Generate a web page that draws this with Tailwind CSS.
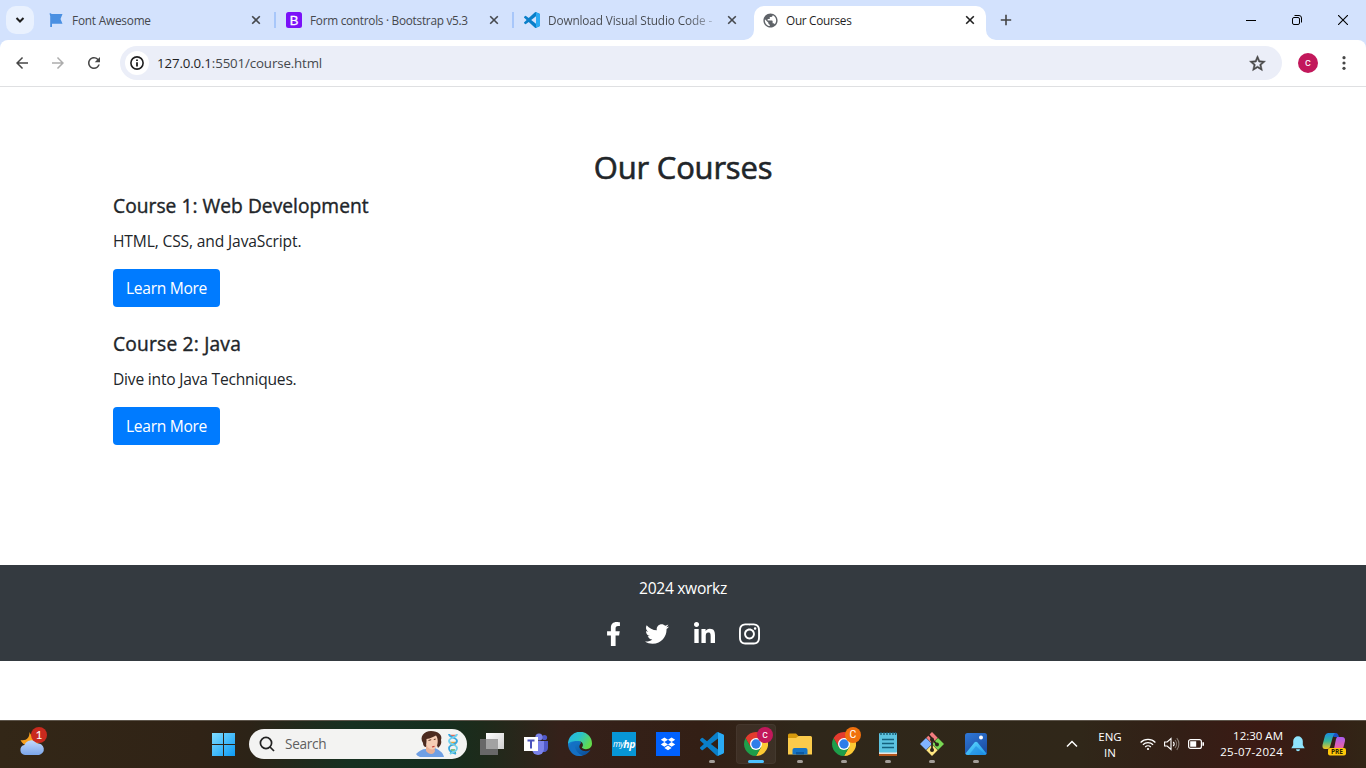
<!DOCTYPE html>
<html lang="en">
<head>
<meta charset="utf-8">
<title>Our Courses</title>
<script src="https://cdn.jsdelivr.net/npm/@tailwindcss/browser@4"></script>
</head>
<body class="w-[1366px] h-[768px] overflow-hidden flex flex-col bg-white font-['Open_Sans','Noto_Sans',sans-serif]">
<svg class="hidden">
  <defs>
    <symbol id="x" viewBox="0 0 10 10"><path d="M1.2 1.2l7.6 7.6M8.800 1.200l-7.600 7.600" stroke="currentColor" stroke-width="1.6" fill="none"/></symbol>
    <symbol id="code" viewBox="0 0 24 24"><path fill="#0a7fc9" d="M23.15 2.587L18.21.21a1.494 1.494 0 0 0-1.705.29l-9.46 8.63-4.12-3.128a.999.999 0 0 0-1.276.057L.327 7.261A1 1 0 0 0 .326 8.74L3.899 12 .326 15.26a1 1 0 0 0 .001 1.479L1.65 17.94a.999.999 0 0 0 1.276.057l4.12-3.128 9.46 8.63a1.492 1.492 0 0 0 1.704.29l4.942-2.377A1.5 1.5 0 0 0 24 20.06V3.939a1.5 1.5 0 0 0-.85-1.352zm-5.146 14.861L10.826 12l7.178-5.448v10.896z"/><path fill="#2aaaf3" d="M18 .2l5.2 2.400Q24 3 24 4v16q0 1-.8 1.400L18 23.800z"/></symbol>
    <symbol id="chrome" viewBox="0 0 24 24"><path fill="#fcc934" d="M12 6h10.400A12 12 0 0 1 12 24l5.200-9z"/><path fill="#1e9e4a" d="M1.610 6A12 12 0 0 0 12 24l5.200-9L12 12 6.800 15z"/><path fill="#e33b2e" d="M1.610 6L6.800 15 12 12V6h10.390A12 12 0 0 0 1.610 6z"/><circle cx="12" cy="12" r="6" fill="#fff"/><circle cx="12" cy="12" r="4.700" fill="#2f7de9"/></symbol>
  </defs>
</svg>

<!-- tab strip -->
<div class="h-10 shrink-0 bg-[#d3e2fd] flex text-[12px] text-[#45484d]">
  <div class="w-[37px] pl-1.5 pt-1.5 shrink-0">
    <div class="size-7 rounded-[10px] bg-[#e9f1fe] flex items-center justify-center">
      <svg class="size-[10px]" viewBox="0 0 10 10"><path d="M1.500 3l3.500 3.500L8.500 3" fill="none" stroke="#1f1f1f" stroke-width="2"/></svg>
    </div>
  </div>
  <div class="w-[238px] h-10 flex items-center pl-[11px] pr-[14px] shrink-0">
    <svg class="size-4 shrink-0" viewBox="0 0 16 16"><path fill="#4a90e2" d="M1.500 1.500a1.200 1.200 0 0 1 2 .5h11l-2 5 2 4.700H4V15H2.200V4z"/></svg>
    <span class="ml-2 mt-px flex-1 whitespace-nowrap text-[11.8px] tracking-[-0.2px]">Font Awesome</span>
    <svg class="size-[10px]"><use href="#x"/></svg>
  </div>
  <div class="w-[238px] h-10 flex items-center pl-0 pr-[14px] shrink-0">
    <div class="w-0.5 h-4 -ml-px bg-[#a8c7fa]"></div>
    <svg class="size-4 shrink-0 ml-[10px]" viewBox="0 0 16 16"><rect width="16" height="16" rx="2.500" fill="#7a11f8"/><text x="8" y="12.800" text-anchor="middle" font-family="Liberation Sans" font-size="13" fill="#fff" stroke="#fff" stroke-width=".3">B</text></svg>
    <span class="ml-2 mt-px flex-1 whitespace-nowrap text-[11.8px] tracking-[-0.27px]">Form controls · Bootstrap v5.3</span>
    <svg class="size-[10px]"><use href="#x"/></svg>
  </div>
  <div class="w-[238px] h-10 flex items-center pl-0 pr-[14px] shrink-0">
    <div class="w-0.5 h-4 -ml-px bg-[#a8c7fa]"></div>
    <svg class="size-4 shrink-0 ml-[10px]"><use href="#code"/></svg>
    <span class="ml-2 mt-px whitespace-nowrap text-[11.8px] tracking-[-0.13px] bg-linear-to-r from-[#45484d] from-85% to-[#45484d]/30 bg-clip-text text-transparent">Download Visual Studio Code -</span>
    <span class="flex-1"></span>
    <svg class="size-[10px]"><use href="#x"/></svg>
  </div>
  <div class="w-[238px] h-10 flex items-end shrink-0 -ml-[7px] mr-[7px] text-[#1f1f1f]">
    <svg class="w-[10px] h-[10px] shrink-0" viewBox="0 0 10 10"><path d="M10 0V10H0A10 10 0 0 0 10 0z" fill="#fff"/></svg>
    <div class="w-[232px] h-[34px] bg-white rounded-t-[10px] flex items-center pl-[7.500px] pr-[11px] pb-[6px] shrink-0">
      <svg class="size-[17px] shrink-0" viewBox="0 0 24 24"><path fill="#5f6368" d="M12 2C6.480 2 2 6.480 2 12s4.480 10 10 10 10-4.480 10-10S17.520 2 12 2zm-1 17.930c-3.950-.490-7-3.850-7-7.930 0-.620.080-1.210.210-1.790L9 15v1c0 1.100.9 2 2 2v1.930zm6.900-2.540c-.260-.810-1-1.390-1.900-1.390h-1v-3c0-.550-.450-1-1-1H8v-2h2c.550 0 1-.450 1-1V7h2c1.100 0 2-.9 2-2v-.410c2.930 1.190 5 4.060 5 7.410 0 2.080-.8 3.970-2.100 5.390z"/></svg>
      <span class="ml-[7.500px] mt-px flex-1 whitespace-nowrap text-[11.8px] tracking-[-0.3px]">Our Courses</span>
      <svg class="size-[10px]"><use href="#x"/></svg>
    </div>
    <svg class="w-[10px] h-[10px] shrink-0" viewBox="0 0 10 10"><path d="M0 0V10H10A10 10 0 0 1 0 0z" fill="#fff"/></svg>
  </div>
  <div class="flex-1 flex items-center text-[#1f1f1f]">
    <svg class="size-3 ml-[11px]" viewBox="0 0 12 12"><path d="M6 .8v10.400M.8 6h10.400" stroke="#444" stroke-width="1.600"/></svg>
    <span class="flex-1"></span>
    <svg class="w-[10px] h-[10px] mr-[36px]" viewBox="0 0 10 10"><path d="M0 5.500h10" stroke="#000"/></svg>
    <svg class="w-[10px] h-[10px] mr-[36px]" viewBox="0 0 10 10" fill="none" stroke="#000"><rect x=".5" y="2.500" width="7" height="7" rx="1.500"/><path d="M2.500.5H7A2.500 2.500 0 0 1 9.500 3v4.500"/></svg>
    <svg class="w-[10px] h-[10px] mr-[18px]" viewBox="0 0 10 10"><path d="M0 0l10 10M10 0L0 10" stroke="#000" stroke-width="1.100"/></svg>
  </div>
</div>

<!-- toolbar -->
<div class="h-[47px] shrink-0 bg-[#d3e2fd]">
  <div class="h-full bg-white rounded-t-[8px] border-b border-[#dfe0e2] flex items-center">
    <svg class="size-[18px] ml-[13px]" viewBox="0 0 24 24"><path fill="#474747" d="M20 11H7.830l5.590-5.590L12 4l-8 8 8 8 1.410-1.410L7.830 13H20v-2z"/></svg>
    <svg class="size-[18px] ml-[18px] rotate-180" viewBox="0 0 24 24"><path fill="#adadad" d="M20 11H7.830l5.590-5.590L12 4l-8 8 8 8 1.410-1.410L7.830 13H20v-2z"/></svg>
    <svg class="size-[18px] ml-[18px]" viewBox="0 0 24 24"><path fill="#474747" d="M17.650 6.350A7.958 7.958 0 0 0 12 4c-4.420 0-7.990 3.580-7.990 8s3.570 8 7.990 8c3.730 0 6.840-2.550 7.730-6h-2.080A5.990 5.990 0 0 1 12 18c-3.310 0-6-2.690-6-6s2.690-6 6-6c1.660 0 3.140.690 4.220 1.780L13 11h7V4l-2.350 2.350z"/></svg>
    <div class="ml-[17px] w-[1162px] h-[34px] rounded-full bg-[#ebeef8] flex items-center pl-[5px] pr-[15px]">
      <div class="size-6 rounded-full bg-white flex items-center justify-center">
        <svg class="size-[14px]" viewBox="0 0 14 14"><circle cx="7" cy="7" r="6.100" fill="none" stroke="#1f1f1f" stroke-width="1.600"/><path d="M7 6.200v4.200M7 3.500v1.600" stroke="#1f1f1f" stroke-width="1.800"/></svg>
      </div>
      <span class="ml-2 mt-px flex-1 text-[13.300px] tracking-[-0.14px] text-[#45484d]"><span class="text-[#1f1f1f]">127.0.0.1</span>:5501/course.html</span>
      <svg class="size-[19px]" viewBox="0 0 24 24"><path fill="#474747" stroke="#474747" stroke-width=".7" d="M22 9.240l-7.190-.620L12 2 9.190 8.630 2 9.240l5.460 4.730L5.820 21 12 17.270 18.180 21l-1.630-7.030L22 9.240zM12 15.400l-3.760 2.270 1-4.280-3.320-2.880 4.380-.380L12 6.100l1.710 4.040 4.380.380-3.320 2.880 1 4.280L12 15.400z"/></svg>
    </div>
    <div class="size-5 ml-4 rounded-full bg-[#c2185b] text-white text-[11px] font-['Roboto'] flex items-center justify-center">c</div>
    <svg class="w-1 h-[14px] ml-6" viewBox="0 0 4 14" fill="#474747"><circle cx="2" cy="1.700" r="1.600"/><circle cx="2" cy="7" r="1.600"/><circle cx="2" cy="12.300" r="1.600"/></svg>
  </div>
</div>

<!-- page -->
<main class="h-[478px] shrink-0 px-[113px] pt-[61px] text-[#212529]">
  <h2 class="text-center text-[31px] leading-[38px] tracking-[-0.2px] [-webkit-text-stroke:0.6px_#212529]">Our Courses</h2>
  <h5 class="mt-2 text-[19.200px] leading-6 tracking-[0.04px] [-webkit-text-stroke:0.4px_#212529]">Course 1: Web Development</h5>
  <p class="mt-[11px] text-[15.600px] leading-6 tracking-[-0.140px]">HTML, CSS, and JavaScript.</p>
  <a class="mt-4 flex w-[107px] h-[38px] pt-0.5 items-center justify-center rounded-[4px] bg-[#007bff] text-white text-[15.600px] tracking-[-0.320px]">Learn More</a>
  <h5 class="mt-[25px] text-[19.200px] leading-6 tracking-[0.2px] [-webkit-text-stroke:0.4px_#212529]">Course 2: Java</h5>
  <p class="mt-[11px] text-[15.600px] leading-6 tracking-[-0.210px]">Dive into Java Techniques.</p>
  <a class="mt-4 flex w-[107px] h-[38px] pt-0.5 items-center justify-center rounded-[4px] bg-[#007bff] text-white text-[15.600px] tracking-[-0.320px]">Learn More</a>
</main>
<footer class="h-24 shrink-0 bg-[#343a40] text-white flex flex-col items-center pt-[11px]">
  <p class="text-[15.600px] leading-6 tracking-[-0.3px]">2024 xworkz</p>
  <div class="mt-[22px] flex gap-[24.400px] items-center">
    <svg class="w-[15px] h-6" viewBox="0 0 320 512" fill="#fff"><path d="M279.140 288l14.220-92.660h-88.910v-60.130c0-25.350 12.420-50.060 52.240-50.060h40.420V6.260S260.430 0 225.360 0c-73.220 0-121.080 44.380-121.080 124.720v70.620H22.890V288h81.390v224h100.170V288z"/></svg>
    <svg class="size-6" viewBox="0 0 512 512" fill="#fff"><path d="M459.370 151.716c.325 4.548.325 9.097.325 13.645 0 138.720-105.583 298.558-298.558 298.558-59.452 0-114.680-17.219-161.137-47.106 8.447.974 16.568 1.299 25.340 1.299 49.055 0 94.213-16.568 130.274-44.832-46.132-.975-84.792-31.188-98.112-72.772 6.498.974 12.995 1.624 19.818 1.624 9.421 0 18.843-1.300 27.614-3.573-48.081-9.747-84.143-51.980-84.143-102.985v-1.299c13.969 7.797 30.214 12.670 47.431 13.319-28.264-18.843-46.781-51.005-46.781-87.391 0-19.492 5.197-37.360 14.294-52.954 51.655 63.675 129.300 105.258 216.365 109.807-1.624-7.797-2.599-15.918-2.599-24.040 0-57.828 46.782-104.934 104.934-104.934 30.213 0 57.502 12.670 76.670 33.137 23.715-4.548 46.456-13.320 66.599-25.340-7.798 24.366-24.366 44.833-46.132 57.827 21.117-2.273 41.584-8.122 60.426-16.243-14.292 20.791-32.161 39.308-52.628 54.253z"/></svg>
    <svg class="w-[21px] h-6" viewBox="0 0 448 512" fill="#fff"><path d="M100.280 448H7.400V148.900h92.880zM53.790 108.100C24.090 108.100 0 83.500 0 53.800a53.790 53.790 0 0 1 107.580 0c0 29.700-24.100 54.300-53.790 54.300zM447.900 448h-92.680V302.400c0-34.700-.7-79.200-48.290-79.200-48.290 0-55.690 37.700-55.690 76.700V448h-92.780V148.900h89.080v40.800h1.300c12.400-23.500 42.690-48.300 87.880-48.300 94 0 111.280 61.900 111.280 142.300V448z"/></svg>
    <svg class="w-[21px] h-6" viewBox="0 0 448 512" fill="#fff"><path d="M224.100 141c-63.600 0-114.900 51.300-114.900 114.900s51.300 114.900 114.900 114.900S339 319.500 339 255.900 287.700 141 224.100 141zm0 189.600c-41.100 0-74.700-33.500-74.700-74.700s33.500-74.700 74.700-74.700 74.700 33.500 74.700 74.700-33.600 74.700-74.700 74.700zm146.400-194.300c0 14.900-12 26.800-26.800 26.800-14.900 0-26.800-12-26.800-26.800s12-26.800 26.800-26.800 26.800 12 26.800 26.800zm76.100 27.200c-1.700-35.900-9.900-67.700-36.200-93.900-26.200-26.200-58-34.400-93.900-36.200-37-2.100-147.900-2.100-184.900 0-35.800 1.700-67.600 9.900-93.900 36.100s-34.400 58-36.200 93.900c-2.100 37-2.100 147.900 0 184.900 1.700 35.900 9.900 67.700 36.200 93.900s58 34.400 93.900 36.200c37 2.100 147.900 2.100 184.900 0 35.900-1.700 67.700-9.900 93.900-36.200 26.200-26.200 34.400-58 36.200-93.900 2.100-37 2.100-147.800 0-184.800zM398.800 388c-7.800 19.600-22.900 34.700-42.600 42.600-29.500 11.700-99.500 9-132.100 9s-102.700 2.600-132.100-9c-19.600-7.800-34.700-22.900-42.600-42.600-11.700-29.500-9-99.500-9-132.100s-2.600-102.700 9-132.100c7.800-19.600 22.900-34.700 42.600-42.600 29.500-11.700 99.500-9 132.100-9s102.700-2.600 132.100 9c19.600 7.800 34.700 22.900 42.600 42.600 11.700 29.500 9 99.500 9 132.100s2.700 102.700-9 132.100z"/></svg>
  </div>
</footer>
<div class="h-[59px] shrink-0"></div>

<!-- taskbar -->
<div class="h-12 shrink-0 border-t border-[#5d554b] pb-px bg-[linear-gradient(90deg,#332717_0,#302316_200px,#2c2317_250px,#163021_350px,#152e1f_440px,#1d2b1b_480px,#35211a_560px,#331f15_700px,#2f271a_800px,#302719_1080px,#331f16_1180px,#3b1a14_1260px,#332015_1330px,#322516_1366px)] flex items-center text-white">
  <div class="w-[30px] h-[30px] ml-[18px] relative">
    <svg class="w-[30px] h-[30px]" viewBox="0 0 30 30"><defs><linearGradient id="cl" x2="0" y2="1"><stop stop-color="#c2d9fb"/><stop offset="1" stop-color="#7ba6ea"/></linearGradient></defs><path fill="#f8a01c" d="M11.500 3c2 5 6 8 11 8-2 5-8 8-13 6-3-1-6-3-7-6 6 1 9-2 9-8z"/><path fill="url(#cl)" d="M7 26a5 5 0 0 1-.5-9.900A7 7 0 0 1 19 14.500a5.700 5.700 0 0 1 2 11.500z"/></svg>
    <div class="absolute left-[13px] -top-[2px] size-4 rounded-full bg-[#c92a1e] text-[12px] leading-4 text-center font-['Lato']">1</div>
  </div>
  <svg class="size-[23px] ml-[164px]" viewBox="0 0 23 23"><defs><linearGradient id="wn" x2="1" y2="1"><stop stop-color="#7fdcff"/><stop offset="1" stop-color="#0c9bf5"/></linearGradient></defs><path fill="url(#wn)" d="M0 0h11v11H0zM12 0h11v11H12zM0 12h11v11H0zM12 12h11v11H12z"/></svg>
  <div class="w-[218px] h-[30px] ml-[14px] rounded-full bg-[#f3f3f2] flex items-center">
    <svg class="size-4 ml-[10px]" viewBox="0 0 16 16" fill="none" stroke="#222" stroke-width="1.700"><circle cx="7" cy="7" r="5.600"/><path d="M11 11l4 4"/></svg>
    <span class="ml-[10px] flex-1 text-[13.600px] tracking-[-0.3px] text-[#5f5f5f]">Search</span>
    <svg class="w-7 h-[26px]" viewBox="0 0 28 26"><path fill="#6f9fe4" d="M0 23c3-3 6-5 10-5l9-1c4 2 8 4 9 9H4q-3-1-4-3z"/><path fill="#e9b096" d="M10 14l0 6c3 4 8 4 9 0l-1-7z"/><path fill="#4b2a20" d="M7 12C3 6 8 0 15 0s12 4 10 9c1 4-1 6-3 8l-3-8-8 1-1 6c-2 0-3-2-3-4z"/><path fill="#f6cdb5" d="M10.500 8c4-.5 7-2.500 9.500-3.500 2.500 3 2 8.500.5 11.500-2.500 4-8 3-10-2z"/><path d="M12.500 9.500l2.700-.8M17.800 8.500l1.900-.4" stroke="#5b3325"/><path d="M16 16l2.500-.6" stroke="#c23f3b" stroke-width="1.200"/></svg>
    <svg class="w-[10px] h-[22px] ml-1 mr-[9px]" viewBox="0 0 10 22" fill="none" stroke-width="1.800"><path stroke="#e66c58" stroke-width="1.300" d="M2 2.500h6M3 4.500h4"/><path stroke="#eca63e" stroke-width="1.300" d="M2 9.500h6M2 12h6"/><path stroke="#58ae63" stroke-width="1.300" d="M3 17h4M2 19.500h6"/><path stroke="#36a6e0" d="M1 1c0 4 8 3 8 7s-8 3-8 7 3 4 7 6"/><path stroke="#6fd0ef" d="M9 1c0 4-8 3-8 7s8 3 8 7-5 4-7 6"/></svg>
  </div>
  <div class="flex ml-[3px] h-full">
    <div class="w-11 flex justify-center items-center"><svg class="size-6" viewBox="0 0 24 24"><defs><linearGradient id="tv" x2="1" y2="1"><stop stop-color="#fff"/><stop offset="1" stop-color="#cfcfcf"/></linearGradient></defs><path fill="url(#tv)" d="M6 1h18v16H6z"/><path fill="#686868" d="M0 7h18v16H0z"/><path fill="#a2a2a2" d="M6 7h12v10H6z"/></svg></div>
    <div class="w-11 flex justify-center items-center"><svg class="size-6" viewBox="0 0 24 24"><circle cx="20.500" cy="5.500" r="2.600" fill="#5059c9"/><circle cx="15" cy="5" r="3.600" fill="#7b83eb"/><path fill="#5059c9" d="M16 9h8v7a4 4 0 0 1-6 3.500z"/><path fill="#7b83eb" d="M8 9h12v8a6 6 0 0 1-12 0z"/><rect y="5" width="14" height="14" fill="#fff"/><path d="M3.500 8.500h7M7 8.500v8" stroke="#4b53bc" stroke-width="2"/></svg></div>
    <div class="w-11 flex justify-center items-center"><svg class="size-6" viewBox="0 0 24 24"><defs><linearGradient id="e1" x2="1" y2=".5"><stop stop-color="#21b4ea"/><stop offset=".5" stop-color="#2bc3c9"/><stop offset="1" stop-color="#62db4c"/></linearGradient><linearGradient id="e2" x2=".7" y2="1"><stop stop-color="#1686d8"/><stop offset="1" stop-color="#0c509c"/></linearGradient></defs><path fill="url(#e2)" d="M0 12C0 8 5 6.500 9 7c2 1 4 3 4 4-3 3-2 7 3 8 3 .5 5-.5 6.500-1.200C20 22 16 24 12 24A12 12 0 0 1 0 12z"/><path fill="#1470c4" d="M8 9c-3 5 0 13 7 14.500-7 2-13-2-13-8C2 12 5 9 8 9z"/><path fill="url(#e1)" d="M0 12A12 12 0 0 1 24 11.500c0 4-3 5.700-6 5.700-2.500 0-4.500-1-4-1.900 2-2 1-6.300-4.500-6.300C5 9 1 10 0 12z"/></svg></div>
    <div class="w-11 flex justify-center items-center"><div class="size-6 bg-[#0796d6] flex items-center justify-center italic text-[8.500px] leading-6 tracking-[-0.5px]"><span>my</span><b class="text-[10.500px]">hp</b></div></div>
    <div class="w-11 flex justify-center items-center"><svg class="size-6" viewBox="0 0 24 24"><path fill="#0061fe" d="M0 0h24v24H0z"/><path fill="#fff" d="M8.400 5.500L12 7.800 8.400 10.100 4.800 7.800zM15.600 5.500l3.600 2.300-3.600 2.300L12 7.800zM8.400 10.100L12 12.400 8.400 14.700 4.800 12.400zM15.600 10.100l3.600 2.300-3.600 2.300L12 12.400zM12 13.600l3.600 2.300L12 18.200 8.400 15.900z"/></svg></div>
    <div class="w-11 flex justify-center items-center relative"><svg class="size-6"><use href="#code"/></svg><i class="absolute bottom-[4px] left-[19px] w-1.5 h-[3px] rounded-full bg-[#a39d98]"></i></div>
    <div class="w-11 flex justify-center items-center relative"><div class="absolute left-[2px] top-[3px] w-10 h-10 rounded-[4px] bg-white/6 border border-white/4"></div><svg class="size-6 relative"><use href="#chrome"/></svg><div class="absolute left-[23px] top-[6px] size-4 rounded-full bg-[#c2185b] text-[10.500px] leading-[15px] text-center font-['Roboto']">c</div><i class="absolute bottom-[4px] left-[14px] w-4 h-[3px] rounded-full bg-[#4cc2ff]"></i></div>
    <div class="w-11 flex justify-center items-center relative"><svg class="size-6" viewBox="0 0 24 24"><path fill="#d69a0d" d="M0 3a1.500 1.500 0 0 1 1.500-1.500H8L10.500 4v4H0z"/><path fill="#fbcb4b" d="M0 6h8l2.500-2H22.500A1.500 1.500 0 0 1 24 5.500V22.500H0z"/><path fill="#1674c4" d="M4.500 22.500V18a2 2 0 0 1 2-2h11a2 2 0 0 1 2 2v4.500z"/><path fill="#0c59a0" d="M8 20h8v2.500H8z"/></svg><i class="absolute bottom-[4px] left-[19px] w-1.5 h-[3px] rounded-full bg-[#a39d98]"></i></div>
    <div class="w-11 flex justify-center items-center relative"><svg class="size-6"><use href="#chrome"/></svg><div class="absolute left-[23px] top-[6px] size-4 rounded-full bg-[#f0700d] text-[10.500px] leading-4 text-center font-['Roboto']">C</div><i class="absolute bottom-[4px] left-[19px] w-1.5 h-[3px] rounded-full bg-[#a39d98]"></i></div>
    <div class="w-11 flex justify-center items-center relative"><svg class="size-6" viewBox="0 0 24 24"><path fill="#e9e6e2" d="M3 18h18v4H3z"/><path fill="#b5561c" d="M3 22h18v2H3z"/><rect x="3" y="1" width="18" height="19.500" rx="1" fill="#5cc3e0"/><path d="M5 0v3M8 0v3M11 0v3M14 0v3M17 0v3M19.500 0v3" stroke="#16566f" stroke-width="1.300"/><path d="M6 7.500h12M6 11.500h12M6 15.500h12" stroke="#14617e" stroke-width="1.500"/></svg><i class="absolute bottom-[4px] left-[19px] w-1.5 h-[3px] rounded-full bg-[#a39d98]"></i></div>
    <div class="w-11 flex justify-center items-center relative"><svg class="size-6" viewBox="0 0 24 24"><path fill="#f37c7f" d="M12 0l5.700 5.700L12 11.400 6.300 5.700z"/><path fill="#80b3ff" d="M6 6l6 6-6 6-6-6z"/><path fill="#78d753" d="M18 6l6 6-6 6-6-6z"/><path fill="#ffe680" d="M12 12.600l5.700 5.700L12 24l-5.700-5.700z"/><path d="M8.500 2.500L12 6.500V19M12 7l5 5.500" stroke="#2b2219" stroke-width="1.700" fill="none"/><g fill="#2b2219"><circle cx="12" cy="7.500" r="2"/><circle cx="17" cy="12.500" r="2"/><circle cx="12" cy="18" r="2"/></g></svg><i class="absolute bottom-[4px] left-[19px] w-1.5 h-[3px] rounded-full bg-[#a39d98]"></i></div>
    <div class="w-11 flex justify-center items-center relative"><svg class="size-6" viewBox="0 0 24 24"><defs><linearGradient id="ph" x2=".6" y2="1"><stop stop-color="#2f78d8"/><stop offset="1" stop-color="#1c4fa3"/></linearGradient><linearGradient id="pm" x2="1" y2="1"><stop stop-color="#62dbff"/><stop offset="1" stop-color="#1c97ea"/></linearGradient></defs><rect x="1" y="1" width="22" height="22" rx="2.500" fill="url(#ph)"/><path fill="url(#pm)" d="M1.500 21.500l9-11q1.500-1.500 3 0l9 11q-.5 1.500-2.500 1.500H4q-2 0-2.500-1.500z"/><path fill="#1c7fdb" d="M12 14l9 8.500q-1 .5-2 .5H5z" opacity=".5"/><circle cx="17" cy="5.500" r="2" fill="#fff"/></svg><i class="absolute bottom-[4px] left-[19px] w-1.5 h-[3px] rounded-full bg-[#a39d98]"></i></div>
  </div>
  <span class="flex-1"></span>
  <svg class="w-3 h-[10px] mr-5" viewBox="0 0 12 10"><path d="M1 7.500l5-5 5 5" fill="none" stroke="#fff" stroke-width="1.500"/></svg>
  <div class="w-6 pt-px flex flex-col items-center whitespace-nowrap text-[11.500px] leading-4 mr-[18px]"><span>ENG</span><span>IN</span></div>
  <svg class="w-4 h-[14px] mr-2" viewBox="0 0 16 14" fill="none" stroke="#fff" stroke-width="1.200"><path d="M.6 5.500a10.500 10.500 0 0 1 14.800 0M2.900 7.800a7.300 7.300 0 0 1 10.200 0M5.200 10a4 4 0 0 1 5.600 0"/><circle cx="8" cy="12" r="1.100" fill="#fff" stroke="none"/></svg>
  <svg class="w-4 h-[14px] mr-2" viewBox="0 0 16 14" fill="none" stroke="#fff" stroke-width="1.100"><path d="M.6 5h2.600L7 1.500v11L3.200 9H.6zM9.300 4.800a3.500 3.500 0 0 1 0 4.400"/><path stroke="#857b73" d="M11 3a6 6 0 0 1 0 8M12.800 1.200a9 9 0 0 1 0 11.600"/></svg>
  <svg class="w-4 h-[10px] mr-[13px]" viewBox="0 0 16 10"><rect x=".6" y=".6" width="12.800" height="8.800" rx="2" fill="none" stroke="#fff" stroke-width="1.200"/><path fill="#fff" d="M2.200 2.200h6v5.600h-6zM14.400 3.300H16v3.400h-1.600z"/></svg>
  <div class="w-[66px] text-right text-[11.500px] leading-4 whitespace-nowrap flex flex-col items-end"><span>12:30 AM</span><span class="tracking-[0.28px]">25-07-2024</span></div>
  <svg class="w-[14px] h-4 ml-2" viewBox="0 0 14 16" fill="#8fe4fd"><path d="M7 .3A4.800 4.800 0 0 1 11.800 5v4l1.900 3.300H.3L2.200 9V5A4.800 4.800 0 0 1 7 .3zM5 13.200h4a2 2 0 0 1-4 0z"/></svg>
  <svg class="w-6 h-6 ml-[17px] mr-5" viewBox="0 0 24 24"><defs><linearGradient id="c1" x2="0" y2="1"><stop stop-color="#1a8ce0"/><stop offset=".5" stop-color="#35b69a"/><stop offset="1" stop-color="#f3c51d"/></linearGradient><linearGradient id="c2" x2="0" y2="1"><stop stop-color="#a95cf0"/><stop offset="1" stop-color="#f4649a"/></linearGradient></defs><path fill="#1c50c5" d="M6 1h8q2 0 3 4h-5z"/><path fill="url(#c1)" d="M6 1h7q-1.500 1-2.500 5L8 15q-.7 2-2.500 2H3q-3 0-2.500-4L3 3.500Q4 1 6 1z"/><path fill="url(#c2)" d="M15 5h5q3.500 0 3 4l-2 8h-9l2-10z"/><rect x="6" y="16" width="18" height="7.500" rx="2" fill="#ffc80a"/><text x="15" y="22.200" text-anchor="middle" font-family="Open Sans" font-weight="700" font-size="6.500" fill="#2b2200">PRE</text></svg>
</div>
</body>
</html>
